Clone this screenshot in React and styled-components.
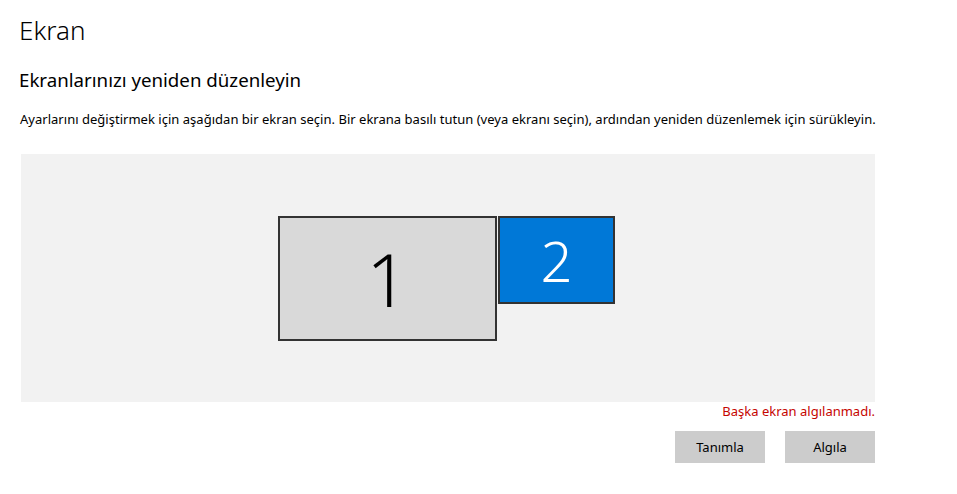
import React from "react";
import styled, { createGlobalStyle } from "styled-components";

const GlobalStyle = createGlobalStyle`
  html, body {
    margin: 0;
    padding: 0;
    background: #ffffff;
    font-family: "Noto Sans", "Open Sans", sans-serif;
    color: #000000;
  }
`;

const Page = styled.div`
  width: 957px;
  height: 494px;
  padding: 0 0 0 19px;
  box-sizing: border-box;
  display: flex;
  flex-direction: column;
`;

const Title = styled.h1`
  margin: 10px 0 0 0;
  font-size: 26px;
  font-weight: 300;
  line-height: 40px;
`;

const SubTitle = styled.h2`
  margin: 16px 0 0 0;
  font-size: 18.7px;
  font-weight: 400;
  line-height: 28px;
`;

const Description = styled.p`
  margin: 16px 0 0 1px;
  font-size: 13px;
  line-height: 18px;
  letter-spacing: 0.02px;
  white-space: nowrap;
`;

const Canvas = styled.div`
  margin: 26px 0 0 2px;
  width: 854px;
  height: 248px;
  background: #f2f2f2;
  display: flex;
  justify-content: flex-start;
  align-items: flex-start;
  gap: 1px;
  padding: 62px 0 0 257px;
  box-sizing: border-box;
`;

const Monitor = styled.div`
  width: ${(p) => p.$w}px;
  height: ${(p) => p.$h}px;
  box-sizing: border-box;
  border: 2px solid #333333;
  background: ${(p) => (p.$active ? "#0078d7" : "#d9d9d9")};
  color: ${(p) => (p.$active ? "#ffffff" : "#000000")};
  display: flex;
  align-items: center;
  justify-content: center;
  font-size: ${(p) => p.$size}px;
  font-weight: 300;
  line-height: 1;
`;

const Footer = styled.div`
  width: 856px;
  display: flex;
  flex-direction: column;
  align-items: flex-end;
`;

const Warning = styled.div`
  margin-top: 0;
  font-size: 13px;
  line-height: 18px;
  color: #c50500;
`;

const Buttons = styled.div`
  display: flex;
  gap: 20px;
  margin-top: 11px;
`;

const Button = styled.button`
  width: 90px;
  height: 32px;
  border: none;
  background: #cccccc;
  font-family: inherit;
  font-size: 13px;
  color: #000000;
  padding: 0;
`;

export default function App() {
  return (
    <>
      <GlobalStyle />
      <Page>
        <Title>Ekran</Title>
        <SubTitle>Ekranlarınızı yeniden düzenleyin</SubTitle>
        <Description>
          Ayarlarını değiştirmek için aşağıdan bir ekran seçin. Bir ekrana basılı
          tutun (veya ekranı seçin), ardından yeniden düzenlemek için sürükleyin.
        </Description>
        <Canvas>
          <Monitor $w={219} $h={125} $size={74}>1</Monitor>
          <Monitor $w={117} $h={88} $size={56} $active>2</Monitor>
        </Canvas>
        <Footer>
          <Warning>Başka ekran algılanmadı.</Warning>
          <Buttons>
            <Button>Tanımla</Button>
            <Button>Algıla</Button>
          </Buttons>
        </Footer>
      </Page>
    </>
  );
}
